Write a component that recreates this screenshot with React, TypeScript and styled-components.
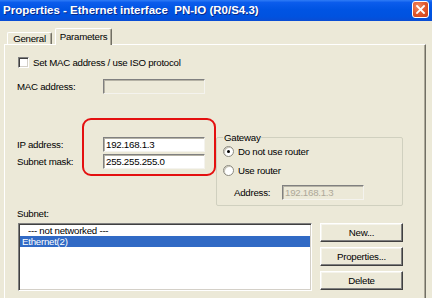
import React from "react";
import styled, { createGlobalStyle } from "styled-components";

const Global = createGlobalStyle`
  html, body { margin: 0; padding: 0; background: #ECE9D8; }
  #root { width: 432px; height: 298px; overflow: hidden; }
  * { box-sizing: border-box; }
`;

const Window = styled.div`
  width: 432px;
  height: 298px;
  overflow: hidden;
  background: #ECE9D8;
  font-family: "Liberation Sans", Arial, sans-serif;
  font-size: 9.7px;
  letter-spacing: -0.25px;
  color: #000;
`;

const TitleBar = styled.div`
  height: 21px;
  display: flex;
  align-items: center;
  justify-content: space-between;
  padding: 0 3px 0 3px;
  background: linear-gradient(
    to bottom,
    #2f7cf6 0%,
    #0b5cec 12%,
    #0054e3 45%,
    #0052df 80%,
    #0a4cd3 100%
  );
`;

const Title = styled.div`
  color: #fff;
  font-weight: bold;
  font-size: 11.5px;
  letter-spacing: 0;
  text-shadow: 1px 1px 0 #0a2a8a;
  white-space: nowrap;
  padding-bottom: 1px;
`;

const CloseButton = styled.div`
  width: 17px;
  height: 17px;
  margin-top: -2px;
  border: 1px solid #fff;
  border-radius: 3px;
  background: radial-gradient(circle at 35% 30%, #f08a64 0%, #e0552a 55%, #c8401a 100%);
  display: flex;
  align-items: center;
  justify-content: center;
`;

const Body = styled.div`
  padding: 7px 0 0 4px;
`;

const TabRow = styled.div`
  height: 16px;
  display: flex;
  align-items: flex-end;
  padding-left: 3px;
  gap: 3px;
`;

const Tab = styled.div<{ $active?: boolean }>`
  position: relative;
  z-index: ${(p) => (p.$active ? 2 : 1)};
  width: ${(p) => (p.$active ? 57 : 45)}px;
  height: ${(p) => (p.$active ? 17 : 12)}px;
  margin-bottom: ${(p) => (p.$active ? -1 : 0)}px;
  background: #ECE9D8;
  border-top: 1px solid #fff;
  border-left: 1px solid #fff;
  border-right: 1px solid #716f64;
  border-radius: 2px 2px 0 0;
  box-shadow: inset -1px 0 0 #aca899;
  display: flex;
  align-items: ${(p) => (p.$active ? "flex-start" : "center")};
  justify-content: center;
  padding-top: ${(p) => (p.$active ? 2 : 0)}px;
  white-space: nowrap;
`;

const Panel = styled.div`
  position: relative;
  width: 422px;
  height: 300px;
  border-top: 1px solid #fff;
  border-left: 1px solid #fff;
  border-right: 1px solid #716f64;
  box-shadow: inset -1px 0 0 #aca899;
  padding: 12px 0 0 12px;
  display: flex;
  flex-direction: column;
`;

const CheckRow = styled.label`
  height: 11px;
  display: flex;
  align-items: center;
  gap: 4px;
  padding-left: 1px;
  white-space: nowrap;
`;

const CheckBox = styled.span`
  width: 11px;
  height: 11px;
  background: #fff;
  border: 1px solid;
  border-color: #808080 #fff #fff #808080;
  box-shadow: inset 1px 1px 0 #404040, inset -1px -1px 0 #d4d0c8;
`;

const FieldRow = styled.div<{ $mt?: number }>`
  display: flex;
  align-items: center;
  height: 15px;
  margin-top: ${(p) => p.$mt ?? 0}px;
`;

const FieldLabel = styled.span<{ $w: number }>`
  width: ${(p) => p.$w}px;
  white-space: nowrap;
`;

const TextBox = styled.div<{ $w: number; $disabled?: boolean }>`
  width: ${(p) => p.$w}px;
  height: 15px;
  background: ${(p) => (p.$disabled ? "#ECE9D8" : "#fff")};
  color: ${(p) => (p.$disabled ? "#aca899" : "#000")};
  border: 1px solid;
  border-color: #808080 #f4f3ee #f4f3ee #808080;
  box-shadow: inset 1px 1px 0 #b5b2a5;
  padding: 0 2px;
  display: flex;
  align-items: center;
  white-space: nowrap;
`;

const Middle = styled.div`
  display: flex;
  align-items: flex-start;
  margin-top: 38px;
  gap: 11px;
`;

const LeftCol = styled.div`
  width: 188px;
  padding-top: 5px;
  display: flex;
  flex-direction: column;
  gap: 2px;
`;

const Group = styled.fieldset`
  margin: 0;
  width: 187px;
  height: 74px;
  padding: 1px 0 0 6px;
  border: 1px solid #d0d0bf;
  border-radius: 2px;
  display: flex;
  flex-direction: column;
  min-width: 0;
`;

const Legend = styled.legend`
  padding: 0 1px;
  margin-left: 0;
  line-height: 11px;
`;

const RadioRow = styled.div<{ $mt?: number }>`
  display: flex;
  align-items: center;
  gap: 4px;
  height: 13px;
  margin-top: ${(p) => p.$mt ?? 0}px;
  white-space: nowrap;
`;

const Radio = styled.span<{ $checked?: boolean }>`
  width: 11px;
  height: 11px;
  border-radius: 50%;
  background: #fff;
  border: 1px solid #8c8a80;
  box-shadow: inset 1px 1px 0 #c9c6b9;
  display: flex;
  align-items: center;
  justify-content: center;
  &::after {
    content: "";
    display: ${(p) => (p.$checked ? "block" : "none")};
    width: 3px;
    height: 3px;
    border-radius: 50%;
    background: #000;
  }
`;

const AddressRow = styled.div`
  display: flex;
  align-items: center;
  height: 15px;
  margin-top: 8px;
  padding-left: 11px;
`;

const SubnetLabel = styled.div`
  margin-top: 2px;
  line-height: 11px;
`;

const Bottom = styled.div`
  display: flex;
  align-items: flex-start;
  gap: 8px;
  margin-top: 4px;
  padding-left: 1px;
`;

const ListBox = styled.div`
  width: 294px;
  height: 68px;
  background: #fff;
  border: 1px solid;
  border-color: #808080 #fff #fff #808080;
  box-shadow: inset 1px 1px 0 #404040, inset -1px -1px 0 #d4d0c8;
  padding: 1px 1px 0 1px;
  display: flex;
  flex-direction: column;
`;

const ListItem = styled.div<{ $selected?: boolean; $indent?: number }>`
  height: 11px;
  line-height: 11px;
  padding-left: ${(p) => p.$indent ?? 2}px;
  background: ${(p) => (p.$selected ? "#316ac5" : "transparent")};
  color: ${(p) => (p.$selected ? "#fff" : "#000")};
  white-space: nowrap;
`;

const ButtonCol = styled.div`
  display: flex;
  flex-direction: column;
  gap: 5px;
`;

const Button = styled.div`
  width: 83px;
  height: 19px;
  background: #ECE9D8;
  border: 1px solid;
  border-color: #fff #404040 #404040 #fff;
  box-shadow: inset -1px -1px 0 #808080, inset 1px 1px 0 #f5f4ec;
  display: flex;
  align-items: center;
  justify-content: center;
  white-space: nowrap;
`;

const Highlight = styled.div`
  position: absolute;
  left: 77px;
  top: 73px;
  width: 134px;
  height: 58px;
  border: 2px solid #e41010;
  border-radius: 9px;
  pointer-events: none;
`;

export default function App() {
  return (
    <>
      <Global />
      <Window>
        <TitleBar>
          <Title>Properties - Ethernet interface&nbsp; PN-IO (R0/S4.3)</Title>
          <CloseButton>
            <svg width="9" height="9" viewBox="0 0 9 9">
              <path d="M1 1 L8 8 M8 1 L1 8" stroke="#fff" strokeWidth="1.8" strokeLinecap="square" />
            </svg>
          </CloseButton>
        </TitleBar>
        <Body>
          <TabRow>
            <Tab>General</Tab>
            <Tab $active>Parameters</Tab>
          </TabRow>
          <Panel>
            <CheckRow>
              <CheckBox />
              Set MAC address / use ISO protocol
            </CheckRow>
            <FieldRow $mt={11}>
              <FieldLabel $w={86}>MAC address:</FieldLabel>
              <TextBox $w={102} $disabled />
            </FieldRow>
            <Middle>
              <LeftCol>
                <FieldRow>
                  <FieldLabel $w={86}>IP address:</FieldLabel>
                  <TextBox $w={102}>192.168.1.3</TextBox>
                </FieldRow>
                <FieldRow>
                  <FieldLabel $w={86}>Subnet mask:</FieldLabel>
                  <TextBox $w={102}>255.255.255.0</TextBox>
                </FieldRow>
              </LeftCol>
              <Group>
                <Legend>Gateway</Legend>
                <RadioRow $mt={1}>
                  <Radio $checked />
                  Do not use router
                </RadioRow>
                <RadioRow $mt={6}>
                  <Radio />
                  Use router
                </RadioRow>
                <AddressRow>
                  <FieldLabel $w={48}>Address:</FieldLabel>
                  <TextBox $w={82} $disabled>192.168.1.3</TextBox>
                </AddressRow>
              </Group>
            </Middle>
            <SubnetLabel>Subnet:</SubnetLabel>
            <Bottom>
              <ListBox>
                <ListItem $indent={8}>--- not networked ---</ListItem>
                <ListItem $selected>Ethernet(2)</ListItem>
              </ListBox>
              <ButtonCol>
                <Button>New...</Button>
                <Button>Properties...</Button>
                <Button>Delete</Button>
              </ButtonCol>
            </Bottom>
            <Highlight />
          </Panel>
        </Body>
      </Window>
    </>
  );
}
